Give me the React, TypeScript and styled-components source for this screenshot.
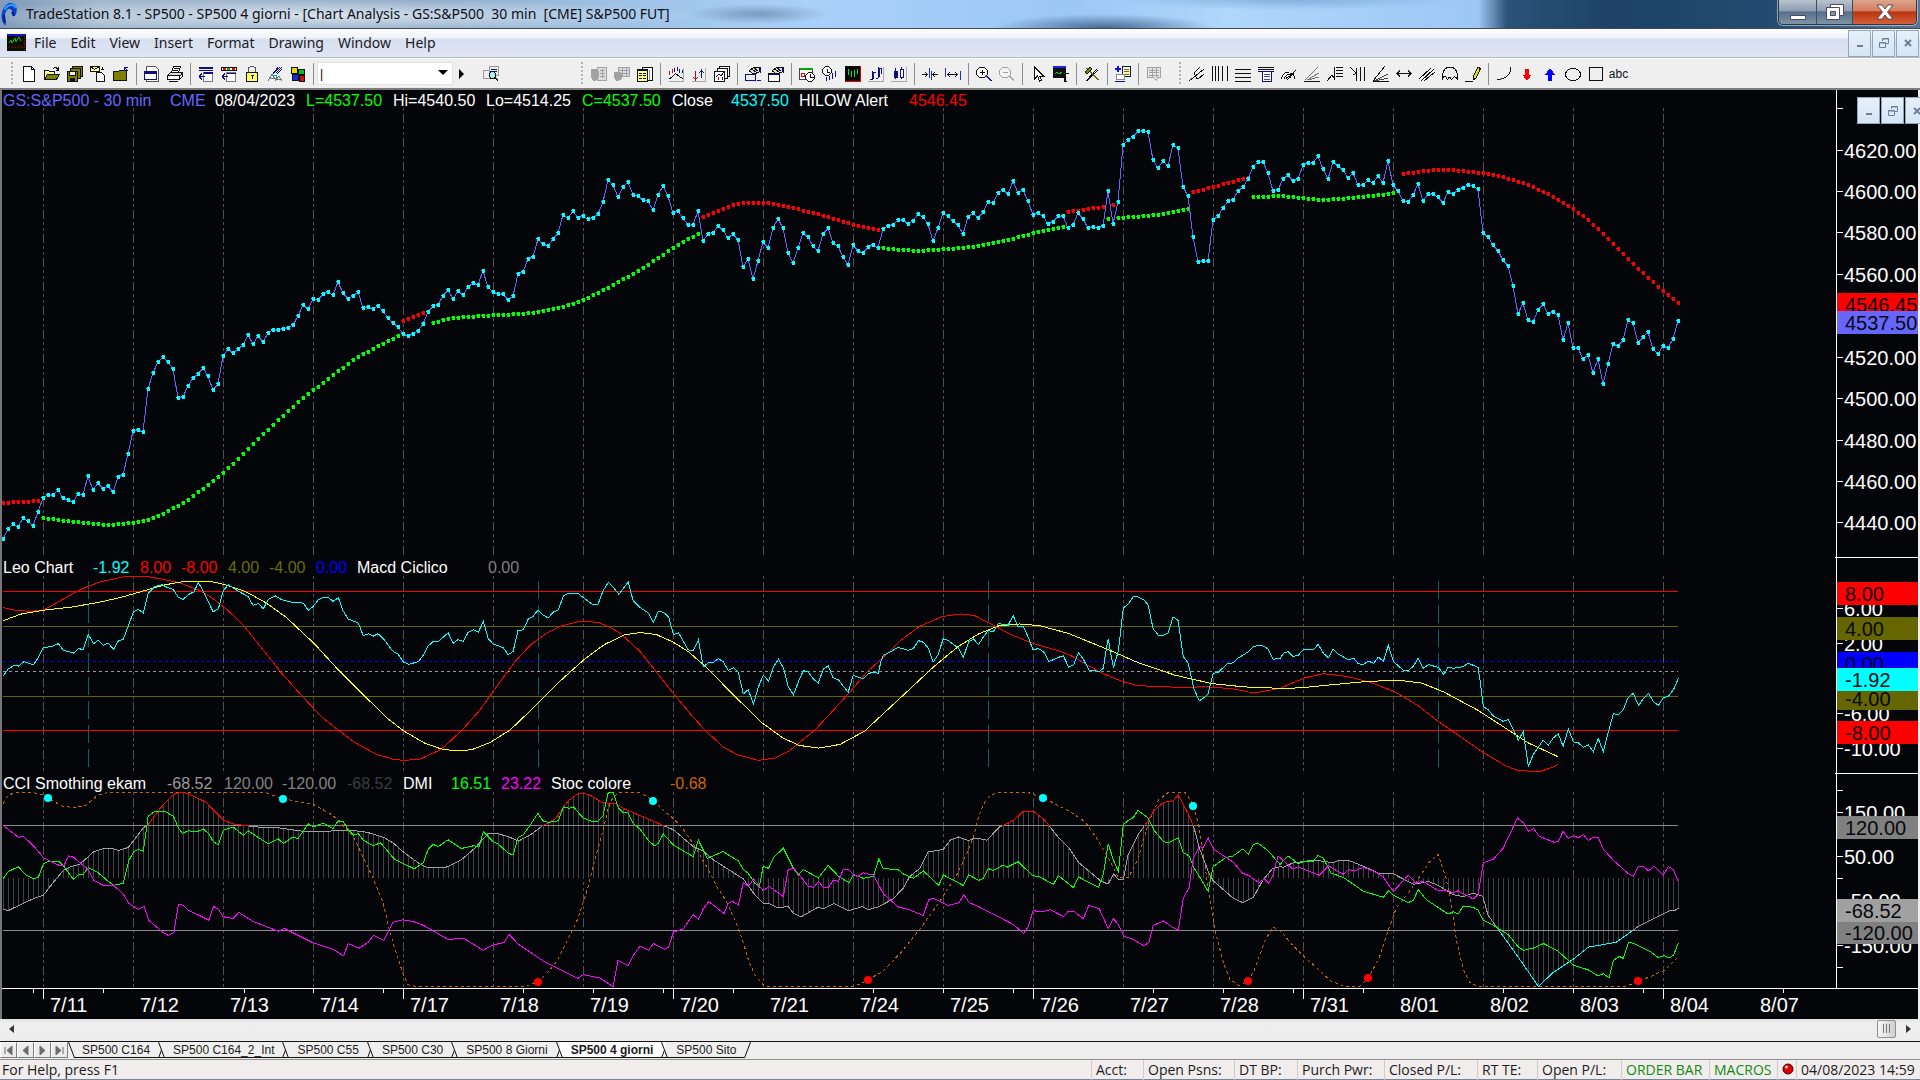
import React from "react";
import styled, { createGlobalStyle } from "styled-components";

const UI_FONT = '"Noto Sans", "Open Sans", sans-serif';
const CHART_FONT = '"Liberation Sans", Arial, sans-serif';
const CHART_BG = "#040508";

const GlobalStyle = createGlobalStyle`
  *, *::before, *::after { box-sizing: border-box; }
  body { margin: 0; background: #f0eeee; font-family: ${UI_FONT}; color: #1b1b22; }
  button { font: inherit; color: inherit; padding: 0; border: 0; background: none; }
`;

/* ------------------------------------------------------------------ */
/* Chart data                                                          */
/* ------------------------------------------------------------------ */

const FIRST_X = 3;
const BAR = 5;
const barX = (i: number) => FIRST_X + i * BAR;
const priceY = (v: number) => 100 + v / 3;

const closes: number[] = [
  ...[
    1257, 1227, 1212, 1221, 1194, 1203, 1218, 1176, 1134, 1125, 1125, 1110, 1134, 1140, 1146, 1122, 1125, 1068, 1110,
    1089, 1107, 1098, 1116, 1071, 1065, 1002, 933, 930, 936, 807, 759, 726, 711, 726, 747, 834, 831, 798, 774, 762, 744,
    768, 810, 792, 708, 687, 699, 687, 675, 645, 672, 648, 666, 639, 630, 630, 627, 624, 615, 588, 555, 567, 537, 540,
    522, 516, 525, 486, 519, 537, 528, 516, 564, 561, 567, 558, 573, 594, 609, 621, 642, 648, 642, 633, 612, 576, 558,
    555, 528, 510, 537, 513, 525, 501, 489, 495, 453, 501, 516, 522, 522, 540, 528, 462, 456, 417, 411, 357, 372, 378,
    357, 339, 285, 294, 273, 294, 288, 297, 294, 282, 246, 180, 195, 231, 201, 186, 225, 228,
  ].map((v) => v + 60),
  300, 303, 330, 285, 258, 288, 339, 333, 354, 375, 375, 333, 423, 402, 399, 378, 390, 414, 402, 420, 501, 477, 537,
  483, 426, 444, 384, 357, 384, 459, 489, 444, 399, 411, 438, 453, 402, 384, 429, 438, 471, 495, 435, 453, 459, 441,
  435, 444, 387, 378, 375, 360, 360, 372, 363, 342, 351, 372, 423, 384, 339, 348, 363, 375, 402, 351, 339, 354, 336,
  306, 309, 279, 270, 282, 243, 279, 270, 303, 345, 339, 348, 372, 366, 348, 348, 384, 375, 339, 357, 384, 381, 384,
  378, 273, 372, 306, 135, 120, 111, 93, 93, 96, 180, 204, 183, 198, 135, 144, 261, 288, 411, 486, 483, 483, 360, 348,
  324, 303, 300, 273, 261, 237, 201, 186, 186, 219, 273, 270, 237, 225, 243, 237, 195, 189, 189, 168, 207, 237, 186,
  198, 210, 234, 219, 255, 255, 240, 249, 228, 249, 183, 255, 273, 303, 306, 285, 252, 303, 282, 282, 291, 309, 276,
  282, 270, 264, 255, 258, 267, 399, 411, 435, 453, 480, 498, 558, 642, 609, 660, 666, 630, 612, 642, 636, 645, 720,
  669, 744, 744, 777, 765, 819, 777, 852, 792, 732, 738, 720, 660, 669, 729, 711, 696, 747, 762, 738, 744, 717, 663,
];

type Knot = [number, number];

const highAlerts: Knot[][] = [
  [[0, 1209], [7, 1203]],
  [[80, 663], [84, 639]],
  [[140, 351], [146, 315], [148, 309], [153, 309], [158, 324], [165, 351], [170, 375], [175, 390]],
  [[213, 336], [220, 321]],
  [[222, 315]],
  [[238, 276], [242, 261], [248, 237], [249, 234]],
  [[280, 222], [282, 218], [286, 210], [290, 210], [296, 219], [300, 231], [304, 249], [309, 282], [314, 328],
    [317, 360], [320, 402], [323, 447], [326, 492], [329, 534], [332, 573], [335, 609]],
];

const lowAlerts: Knot[][] = [
  [[8, 1254], [11, 1260], [16, 1269], [21, 1275], [26, 1269], [29, 1260], [32, 1242], [37, 1200], [42, 1143],
    [46, 1092], [50, 1032], [55, 960], [60, 894], [65, 837], [70, 780], [75, 738], [79, 708]],
  [[86, 669], [88, 660], [90, 654], [96, 648], [106, 639], [112, 621], [116, 600], [119, 579], [127, 513],
    [131, 474], [134, 444], [137, 417], [139, 402]],
  [[176, 444], [180, 450], [183, 453], [189, 447], [195, 438], [201, 420], [207, 396], [212, 381]],
  [[221, 357]],
  [[223, 354], [229, 348], [233, 339], [237, 327]],
  [[250, 291], [256, 288], [260, 294], [264, 300], [270, 294], [275, 286], [278, 279]],
];

/* One dot for every bar between the knots of a segment. */
const fillBars = (knots: Knot[]): Knot[] => {
  const out: Knot[] = [knots[0]];
  for (let k = 1; k < knots.length; k++) {
    const [a, va] = knots[k - 1];
    const [b, vb] = knots[k];
    for (let i = a + 1; i <= b; i++) out.push([i, va + ((vb - va) * (i - a)) / (b - a)]);
  }
  return out;
};

/* Indicator traces are kept in three stretches: left, middle and right. */
const STRETCHES = [
  { x: 0, scale: 2.45 },
  { x: 640, scale: 2.45 },
  { x: 1240, scale: 2.306 },
];
const paneY = (v: number) => 550 + v / 2.958;

const trace = (...parts: string[]): Knot[] => {
  const out: Knot[] = [];
  parts.forEach((part, s) => {
    part.split(" ").forEach((pair) => {
      const [px, py] = pair.split(",").map(Number);
      const x = STRETCHES[s].x + px / STRETCHES[s].scale;
      if (!out.length || x > out[out.length - 1][0]) out.push([x, paneY(py)]);
    });
  });
  return out;
};
const toPoints = (t: Knot[]) => t.map(([x, y]) => `${x.toFixed(1)},${y.toFixed(1)}`).join(" ");
const valueAt = (t: Knot[], x: number) => {
  const n = t.findIndex(([tx]) => tx >= x);
  if (n === 0) return t[0][1];
  if (n < 0) return t[t.length - 1][1];
  const [ax, ay] = t[n - 1];
  const [bx, by] = t[n];
  return ay + ((by - ay) * (x - ax)) / (bx - ax);
};

const leo = trace(
  "8,373 20,352 35,341 45,343 59,330 82,340 94,318 106,289 128,285 143,277 155,296 180,305 192,292 204,294 216,250 229,277 241,267 253,282 265,275 278,294 290,269 302,264 314,225 327,183 339,176 351,186 363,128 380,108 397,103 412,112 424,116 437,140 449,146 461,132 475,124 486,96 498,123 510,152 522,183 535,174 547,120 559,103 571,112 584,122 608,138 620,164 633,158 645,174 657,146 675,136 690,147 718,155 743,157 755,178 767,167 780,147 792,140 804,140 816,152 829,141 840,179 853,204 878,216 890,254 902,248 914,255 926,248 939,262 963,300 975,308 988,331 1002,338 1025,330 1037,311 1049,284 1061,271 1074,270 1098,245 1110,276 1122,265 1135,270 1147,243 1160,236 1172,243 1184,211 1196,262 1208,278 1233,289 1245,310 1257,300 1269,238 1282,236 1294,204 1306,196 1318,178 1330,192 1343,201 1355,184 1368,177 1380,136 1392,129 1416,128 1429,141 1453,162 1465,160 1477,122 1490,96 1502,110 1516,131 1539,94 1551,150 1568,170",
  "0,170 20,186 33,214 45,181 57,184 70,198 82,250 94,245 118,295 130,299 143,266 155,346 168,333 180,332 192,321 204,331 216,356 229,348 241,363 253,426 265,413 278,455 290,405 302,370 315,388 327,346 339,323 351,348 363,405 376,428 388,390 400,357 412,361 424,381 437,393 449,352 461,343 473,378 486,384 510,421 522,371 547,381 560,366 572,361 584,365 590,330 596,312 633,288 657,297 670,291 682,268 694,273 706,290 718,332 730,310 743,262 755,268 780,290 792,318 805,272 817,263 829,280 841,258 853,238 865,242 878,218 902,222 914,194 926,226 939,226 951,258 963,296 976,291 990,303 1002,330 1024,318 1037,313 1050,346 1062,340 1074,304 1086,323 1100,355 1125,359 1135,350 1141,304 1147,262 1153,304 1160,348 1172,298 1178,236 1184,172 1196,160 1209,137 1220,139 1235,148 1245,163 1257,233 1270,252 1282,252 1294,245 1306,198 1318,208 1331,315 1343,335 1357,410 1370,446 1380,439 1392,425 1404,365 1416,362 1440,335 1453,334 1465,320 1490,301 1502,287 1514,282 1527,284 1538,292 1551,323 1568,321",
  "0,318 10,312 30,288 42,282 54,282 66,290 77,321 88,323 100,306 111,300 122,315 134,312 146,294 170,294 180,279 192,305 204,319 215,293 227,308 250,325 262,320 273,337 285,338 296,329 308,335 319,317 331,329 342,282 354,330 377,356 388,357 400,343 411,320 422,350 435,339 457,347 470,368 480,347 492,350 515,345 526,335 538,341 549,347 555,400 561,463 572,472 584,491 607,507 619,501 630,530 642,563 653,537 665,640 676,606 699,563 711,578 722,556 734,544 745,581 757,530 769,568 780,570 792,584 803,576 815,597 826,557 838,597 849,540 861,484 872,487 884,472 895,437 907,424 919,460 930,440 942,424 953,448 965,460 976,437 988,433 1000,412 1011,379"
);
const cycleFast = trace(
  "8,170 30,177 75,182 106,178 130,162 180,128 216,107 250,93 302,80 327,78 363,79 400,87 440,97 490,120 520,142 560,180 600,228 640,288 690,364 740,432 790,496 830,534 870,570 920,603 965,620 990,622 1028,619 1075,593 1090,580 1131,534 1175,475 1210,415 1262,330 1300,280 1340,246 1375,225 1420,211 1465,214 1490,226 1520,247 1568,300",
  "0,302 30,345 82,425 130,494 160,534 205,584 240,606 290,622 330,616 365,595 390,570 430,531 465,485 510,426 555,362 600,313 640,266 685,226 740,197 785,189 820,194 860,219 910,251 960,275 1030,300 1060,315 1100,343 1135,366 1180,388 1215,400 1245,403 1340,407 1380,404 1425,408 1460,412 1490,420 1515,421 1568,409",
  "0,415 20,421 45,421 90,408 150,378 192,366 215,369 250,375 300,391 360,421 410,460 455,505 500,545 560,598 610,637 640,652 690,656 715,645 733,635"
);
const cycleSlow = trace(
  "8,209 50,190 106,178 180,168 250,153 300,139 340,125 400,104 440,95 470,92 515,93 550,102 600,122 650,155 700,198 770,277 830,356 895,434 950,499 990,536 1040,571 1080,588 1115,594 1155,591 1200,570 1250,532 1310,463 1370,390 1430,325 1480,280 1530,251 1568,244",
  "0,244 40,250 82,273 120,302 165,350 230,430 300,512 350,556 390,578 437,586 490,575 550,536 640,435 720,345 780,285 830,248 880,224 930,219 980,224 1050,247 1150,296 1220,333 1310,370 1400,395 1480,405 1568,409",
  "0,404 60,409 140,408 200,400 300,388 370,386 420,394 470,420 550,475 610,525 665,571 733,611"
);
const cci = trace(
  "8,1063 20,1067 60,1043 85,1030 106,1021 130,984 155,948 175,936 195,930 229,893 253,883 278,884 290,889 314,880 327,860 351,822 363,812 390,768 412,738 430,719 455,718 475,729 505,746 522,768 547,798 570,810 600,815 650,822 685,822 743,832 800,832 853,828 900,835 940,850 965,868 988,893 1025,926 1045,939 1090,940 1130,917 1165,880 1196,838 1220,839 1250,850 1270,861 1300,842 1330,815 1360,796 1392,742 1415,722 1430,719 1450,728 1475,747 1510,751 1530,766 1568,785",
  "0,786 57,815 82,828 130,877 155,891 180,917 253,973 278,1015 302,1046 315,1045 339,1059 363,1054 376,1075 395,1085 412,1073 437,1056 449,1061 475,1046 510,1067 545,1055 560,1064 585,1055 620,1032 645,1000 660,967 685,942 706,893 743,886 760,858 780,849 805,860 820,852 850,858 880,820 915,800 940,772 963,772 990,797 1025,850 1050,880 1075,925 1100,950 1130,980 1147,988 1160,958 1172,975 1184,974 1196,900 1220,842 1245,800 1260,770 1282,747 1306,742 1319,725 1343,780 1357,820 1370,880 1392,950 1404,978 1453,1030 1477,1043 1502,1028 1527,975 1550,942 1568,937",
  "0,1043 15,1042 30,1030 54,979 77,942 100,938 122,926 170,917 215,925 230,917 250,918 285,936 320,956 354,958 400,989 435,981 457,992 492,1020 515,1025 538,1015 560,1024 572,1080 600,1130 642,1205 688,1291 722,1250 769,1210 803,1175 868,1160 919,1113 990,1067 1003,1066 1011,1059"
);
const dmiPlus = trace(
  "8,972 20,951 45,937 62,960 82,972 94,968 106,929 120,920 145,922 157,936 168,955 180,974 192,960 204,959 216,939 241,955 265,980 278,992 302,986 316,918 327,893 339,885 351,891 357,840 363,787 380,773 404,773 425,788 437,822 447,838 461,831 483,833 498,825 512,840 522,862 535,872 547,829 571,819 596,844 608,831 645,860 657,869 682,855 694,868 718,849 730,854 755,810 767,819 792,808 816,824 829,800 841,804 853,828 866,843 878,839 890,858 914,875 932,866 945,884 965,913 988,928 1015,943 1037,925 1049,885 1061,871 1074,877 1098,857 1130,883 1160,875 1174,878 1184,833 1208,862 1220,869 1245,897 1257,902 1269,851 1282,842 1294,822 1318,779 1330,801 1343,806 1368,801 1380,760 1395,764 1405,760 1429,793 1453,804 1465,802 1477,788 1490,718 1502,718 1514,761 1527,777 1539,778 1551,809 1568,826",
  "0,829 20,858 35,875 45,868 57,840 82,873 130,907 143,858 165,912 204,892 218,903 241,920 253,945 265,956 280,984 292,996 302,935 315,942 327,910 351,882 376,942 388,961 400,945 437,970 461,933 486,965 512,984 522,960 547,971 572,965 585,914 596,942 633,946 645,958 670,971 694,949 732,992 743,961 792,992 805,961 830,977 841,972 853,942 865,948 890,932 900,938 926,922 963,964 976,965 1013,989 1025,963 1062,999 1074,967 1123,998 1135,960 1147,869 1160,918 1172,952 1184,812 1196,800 1209,791 1220,770 1245,793 1260,830 1282,862 1294,866 1319,852 1331,895 1345,905 1357,940 1370,965 1392,1010 1404,937 1435,910 1453,905 1477,884 1490,900 1502,872 1514,867 1538,889 1568,930",
  "0,890 66,892 90,930 111,905 134,928 150,920 170,920 180,903 192,912 210,955 240,970 285,1010 331,1027 342,1008 355,1022 388,1043 400,1036 411,1004 430,1035 480,1077 492,1070 503,1077 515,1053 538,1057 549,1065 561,1095 584,1110 619,1138 640,1172 653,1184 676,1178 700,1164 734,1187 769,1228 803,1242 826,1260 838,1253 851,1266 861,1214 875,1202 884,1208 896,1161 907,1163 945,1187 965,1206 978,1200 990,1207 1000,1198 1011,1162"
);
const dmiMinus = trace(
  "8,815 45,850 57,847 82,875 106,910 145,933 157,933 168,905 180,909 216,945 229,977 253,992 278,991 302,1018 316,1046 339,1063 353,1054 365,1096 400,1132 412,1140 426,1131 437,1048 449,1051 461,1065 512,1095 523,1054 535,1063 547,1085 571,1090 585,1072 620,1099 682,1128 696,1119 767,1162 816,1181 842,1201 853,1164 880,1178 902,1160 915,1140 940,1155 963,1101 988,1094 1015,1100 1037,1110 1098,1152 1135,1148 1184,1184 1206,1169 1235,1161 1247,1137 1270,1166 1330,1215 1392,1253 1416,1267 1429,1256 1470,1266 1502,1292 1514,1214 1539,1229 1551,1200 1568,1172",
  "0,1172 21,1184 33,1164 60,1181 70,1175 82,1130 105,1122 130,1079 143,1092 155,1062 168,1040 206,1075 216,1045 226,1039 241,1050 253,984 266,995 278,973 302,1008 316,995 351,1025 363,945 378,942 412,995 426,998 437,980 449,998 461,999 473,977 486,980 498,945 510,945 522,958 533,966 547,955 572,962 596,1017 633,1056 657,1063 694,1081 707,1035 718,1029 755,1052 782,1043 793,1020 807,1043 830,1055 915,1108 940,1134 951,1115 963,1066 980,1071 1005,1064 1037,1084 1050,1068 1062,1068 1086,1090 1100,1051 1125,1061 1147,1120 1160,1090 1172,1108 1186,1143 1209,1152 1235,1171 1247,1160 1257,1111 1282,1097 1306,1117 1319,1124 1331,1030 1345,1000 1355,915 1370,877 1380,880 1392,852 1406,886 1453,923 1477,957 1490,962 1516,984 1530,973 1540,986 1550,964 1563,905",
  "0,950 122,944 134,937 183,962 204,934 238,960 250,945 262,950 285,939 308,950 331,967 342,990 354,1010 388,962 405,985 422,980 455,1006 480,1008 492,1014 503,1008 538,1032 549,1020 561,925 584,915 607,882 640,793 655,808 665,832 677,824 690,847 725,865 734,862 745,832 757,853 769,845 780,851 792,842 803,859 815,850 826,850 838,885 861,918 895,957 907,965 919,936 930,936 942,949 955,936 976,962 988,936 1000,947 1009,978"
);
const stochastic = trace(
  "8,750 20,725 40,717 80,717 106,725 120,735 150,757 180,762 210,755 240,725 265,717 650,717 690,735 767,752 816,785 853,830 865,845 890,910 914,970 939,1045 951,1110 965,1170 988,1256 1000,1286 1020,1291 1285,1291 1319,1277 1345,1245 1365,1215 1392,1150 1416,1090 1440,1000 1453,937 1477,830 1490,765 1502,730 1520,717 1568,717",
  "0,717 33,742 57,770 82,795 105,825 131,870 143,895 165,940 190,1000 210,1035 240,1115 255,1170 265,1210 280,1255 302,1286 315,1291 522,1291 545,1281 596,1245 640,1190 690,1115 740,1030 777,960 805,885 817,848 830,785 845,745 860,724 880,717 950,717 988,733 1025,756 1055,775 1090,803 1120,855 1147,910 1172,970 1196,970 1220,915 1245,810 1270,740 1294,717 1335,717 1355,750 1370,820 1392,1000 1408,1120 1430,1225 1445,1270 1467,1288 1490,1275 1506,1240 1530,1160 1550,1115 1568,1125",
  "0,1291 122,1170 150,1205 180,1240 210,1275 240,1291 275,1291 295,1267 320,1210 342,1125 360,1060 388,1015 411,973 435,925 457,900 475,970 486,1040 500,1160 515,1240 530,1280 549,1291 890,1291 919,1275 950,1260 980,1242 1009,1205"
);
const topSignals: Knot[] = [[48, 798], [283, 799], [653, 801], [1043, 798], [1193, 806]];
const bottomSignals: Knot[] = [[538, 982], [868, 980], [1248, 981], [1368, 978], [1638, 981]];

const dayLines = Array.from({ length: 19 }, (_, i) => 43 + i * 90);
const cycleLines = [88, 538, 988, 1438];
const dates = ["7/11", "7/12", "7/13", "7/14", "7/17", "7/18", "7/19", "7/20", "7/21", "7/24", "7/25", "7/26", "7/27",
  "7/28", "7/31", "8/01", "8/02", "8/03", "8/04", "8/07"];
const longTicks = [43, 403, 673, 1033, 1303, 1663];
const shortTicks = [33, 103, 244, 313, 383, 523, 593, 663, 733, 873, 943, 1013, 1153, 1223, 1293, 1363, 1503, 1573,
  1643, 1783];

/* ------------------------------------------------------------------ */
/* Window frame                                                        */
/* ------------------------------------------------------------------ */

const Window = styled.div`
  display: flex;
  flex-direction: column;
  min-height: 100vh;
  overflow: hidden;
  background: #f0eeee;
`;

const TitleBar = styled.header`
  display: flex;
  align-items: center;
  gap: 8px;
  height: 29px;
  padding-left: 1px;
  border-bottom: 1px solid #3c4a5c;
  background:
    radial-gradient(70px 10px at 39.500% 50%, rgba(80, 105, 140, 0.5), transparent),
    radial-gradient(110px 14px at 57.500% 100%, rgba(40, 75, 115, 0.75), transparent),
    radial-gradient(170px 10px at 67% 0, rgba(70, 125, 180, 0.4), transparent),
    radial-gradient(380px 16px at 17% 55%, rgba(238, 244, 250, 0.75), transparent),
    linear-gradient(90deg, #7f9bb9 0, #a3b8cd 5%, #93adc8 22%, #9fc3e6 33%, #a9d0f9 42%, #9cc8f5 56%, #b0d6fb 64%,
      #9dc8f4 77%, #2d5279 78.500%, #1d4266 84%, #234a70 92%, #5b7690 100%);
`;
const Title = styled.h1`
  flex: 1;
  margin: 0;
  font: 400 14px/28px ${UI_FONT};
  color: #0c0f18;
  white-space: pre;
`;
const Caption = styled.div`
  display: flex;
  align-self: flex-start;
  height: 25px;
  margin-right: 3px;
  border: 1px solid #27384d;
  border-top: 0;
  border-radius: 0 0 5px 5px;
  overflow: hidden;
  box-shadow: 0 0 0 1px rgba(225, 235, 245, 0.55);
`;
const CaptionButton = styled.button<{ $width: number; $close?: boolean }>`
  display: grid;
  place-items: center;
  width: ${(p) => p.$width}px;
  border-right: 1px solid #3a4c62;
  background: ${(p) =>
    p.$close
      ? "linear-gradient(#dca58c 0, #d27c5c 45%, #b8350f 50%, #d4603a 100%)"
      : "linear-gradient(#b9c4d0 0, #8d9db0 45%, #586e88 50%, #8093a8 100%)"};
  &:last-child { border-right: 0; }
`;

const MenuBar = styled.nav`
  display: flex;
  align-items: center;
  height: 29px;
  padding: 0 1px 0 7px;
  border-bottom: 1px solid #b4b9c8;
  background: linear-gradient(#fdfdff 0, #f0f3fa 30%, #d8dff0 38%, #dfe5f4 100%);
`;
const MenuItem = styled.button`
  padding: 0 7px;
  font-size: 14px;
  line-height: 28px;
`;
const MenuSpace = styled.span`flex: 1;`;
const MdiGroup = styled.div`
  display: flex;
  gap: 1px;
`;
const FloatingMdi = styled(MdiGroup)`
  position: absolute;
  top: 7px;
  right: -10px;
  z-index: 1;
`;
const MdiButton = styled.button`
  display: grid;
  place-items: center;
  width: 23px;
  height: 27px;
  border: 1px solid #93a7bc;
  background: linear-gradient(#e6f0fa, #d6e5f4);
  color: #6d8196;
`;

/* ------------------------------------------------------------------ */
/* Tool bar                                                            */
/* ------------------------------------------------------------------ */

const ToolBar = styled.div`
  display: flex;
  align-items: center;
  height: 32px;
  padding-left: 11px;
  border-top: 1px solid #fff;
  border-bottom: 2px solid #7d7d7b;
  background: #f0efef;
`;
const Grip = styled.span`
  width: 2px;
  height: 24px;
  margin-right: 4px;
  background: repeating-linear-gradient(#b5b5b0 0 2px, transparent 2px 4px);
`;
const ToolButton = styled.button`
  display: grid;
  place-items: center;
  width: 23px;
  height: 24px;
  svg { display: block; }
`;
const Divider = styled.span`
  width: 8px;
  height: 22px;
  background: linear-gradient(#8e8e8e, #8e8e8e) 4px 0 / 1px 100% no-repeat;
`;
const Space = styled.span<{ $w: number }>`width: ${(p) => p.$w}px;`;
const Combo = styled.div`
  display: flex;
  width: 136px;
  height: 23px;
  border: 1px solid #e2e2e2;
  background: #fff;
`;
const ComboInput = styled.input`
  flex: 1;
  min-width: 0;
  padding: 0 2px;
  border: 0;
  outline: 0;
  font: 12px/18px ${CHART_FONT};
`;
const ArrowButton = styled.button`
  display: grid;
  place-items: center;
  width: 18px;
  height: 20px;
`;

/* ------------------------------------------------------------------ */
/* Chart                                                               */
/* ------------------------------------------------------------------ */

const ChartFrame = styled.main`
  position: relative;
  margin-right: 2px;
  border-left: 2px solid #77777a;
  background: ${CHART_BG};
  font-family: ${CHART_FONT};
`;
const Pane = styled.section`
  display: grid;
  grid-template-columns: minmax(0, 1fr) 83px;
  overflow: hidden;
`;
const Plot = styled.svg`
  grid-area: 1 / 1;
  display: block;
`;
const Axis = styled.svg`
  grid-area: 1 / 2;
  display: block;
  font: 20px ${CHART_FONT};
`;
const Legend = styled.div`
  grid-area: 1 / 1;
  display: flex;
  align-self: start;
  padding-left: 1px;
  font-size: 16px;
  line-height: 22px;
  white-space: pre;
`;
const LegendItem = styled.span<{ $slot: number; $color: string }>`
  flex: none;
  width: ${(p) => p.$slot}px;
  color: ${(p) => p.$color};
`;
const DateBar = styled.div`
  display: grid;
  border-top: 1px solid #fff;
`;
const DateTicks = styled.svg`
  grid-area: 1 / 1;
  display: block;
`;
const DateRow = styled.div`
  grid-area: 1 / 1;
  display: flex;
  padding: 5px 0 0 48px;
  overflow: hidden;
  color: #fff;
  font-size: 20px;
  line-height: 22px;
`;
const DateLabel = styled.time`
  flex: none;
  width: 90px;
`;

/* ------------------------------------------------------------------ */
/* Scroll bar, tabs and status bar                                     */
/* ------------------------------------------------------------------ */

const ScrollBar = styled.div`
  display: flex;
  align-items: center;
  height: 23px;
  padding: 0 2px 3px 2px;
  border-bottom: 1px solid #111;
  background: linear-gradient(#e2e2e2, #eeeeee 20%, #ededed);
`;
const ScrollArrow = styled.button`
  display: grid;
  place-items: center;
  width: 20px;
  height: 18px;
`;
const ScrollTrack = styled.div`
  display: flex;
  flex: 1;
  justify-content: flex-end;
  padding-right: 2px;
`;
const Thumb = styled.div`
  display: grid;
  place-items: center;
  width: 19px;
  height: 18px;
  border: 1px solid #8f8f8f;
  border-radius: 2px;
  background: linear-gradient(90deg, #f6f6f6, #cfcfcf);
`;

const TabStrip = styled.div`
  display: flex;
  height: 18px;
  border-bottom: 1px solid #8f8f8f;
  background: #f0efef;
`;
const NavButton = styled.button`
  display: grid;
  place-items: center;
  width: 17px;
  height: 16px;
  border: 1px solid;
  border-color: #fff #7c7c7c #7c7c7c #fff;
  background: #ececec;
  color: #6c6c6c;
`;
const Tabs = styled.div`
  display: flex;
  padding-left: 3px;
`;
const Tab = styled.button<{ $active?: boolean }>`
  position: relative;
  height: 16px;
  padding: 0 12px 0 11px;
  border-bottom: 1px solid #111;
  background: ${(p) => (p.$active ? "#fff" : "transparent")};
  font: ${(p) => (p.$active ? 700 : 400)} 12px/16px ${CHART_FONT};
  white-space: nowrap;
`;
const TabEdge = styled.svg<{ $side: "left" | "right" }>`
  position: absolute;
  top: 0;
  ${(p) => p.$side}: -3px;
  z-index: 1;
`;

const StatusBar = styled.footer`
  display: flex;
  align-items: center;
  height: 21px;
  padding-left: 2px;
  border-bottom: 2px solid #73849c;
  background: #f1eded;
  font: 14px/20px "Open Sans", "Noto Sans", sans-serif;
`;
const StatusText = styled.span`
  flex: 1;
`;
const Cell = styled.span<{ $w: number; $green?: boolean }>`
  flex: none;
  width: ${(p) => p.$w}px;
  padding-left: 4px;
  border-left: 1px solid #cfcccc;
  color: ${(p) => (p.$green ? "#128a12" : "inherit")};
  white-space: nowrap;
`;

/* ------------------------------------------------------------------ */
/* Icons                                                               */
/* ------------------------------------------------------------------ */

type Stroke = [string, string?, string?];
const K = "#111";
const N = "#10107c";
const G = "#a2a2a2";

/* Each icon is a list of [path, stroke, fill] on a 16 by 16 grid. */
const icons: Record<string, Stroke[]> = {
  new: [["M2.5.5h8l3 3v12h-11zM10.5.5v3h3", K, "#fff"]],
  open: [["M.5 13.5v-9h4l1 1h5v3", K, "#ffffa0"], ["M.5 13.5l3-5h12l-3 5z", K, "#808000"], ["M9 3c2-3 4-1 5 1M14.5 1v3h-3", K]],
  saveAll: [["M5.5.5h10v10h-10z", K, "#808000"], ["M3.5 2.5h10v10h-10z", K, "#808000"], ["M.5 5.5h10v10h-10z", K, "#808000"], ["M2.5 5.5h6v4h-6z", K, "#eee"], ["M3.5 12.5h4v3h-4z", K, "#111"]],
  mail: [["M.5.5h9v5h-9z", K, "#ffff90"], ["M.5.5l4 3 5-3", K], ["M6.5 6.5h5l3 3v6h-8z", K, "#fff"], ["M12.5 1v3M10.5 3.5h3", K]],
  closeFolder: [["M.5 14.5v-9h5l1-1h7v10z", K, "#808000"], ["M11 1.5h4M11.5 1.5l4 4M11.5 1v3", N]],
  window: [["M2.5.5h9l3 3v12h-12z", "#555", "#fff"], ["M.5 5.5h12v8h-12z", N, "#fff"], ["M.5 7.5h12", N], ["M1 6.5h12", N]],
  print: [["M4.5 6.5l2-6h7l-2 6z", K, "#fff"], ["M.5 9.5l3-3h12l-2 3z", K, "#ddd"], ["M.5 9.5h12v4h-12z", K, "#fff"], ["M12.5 13.5l3-3v-4M6.5 2.5h6M5.5 4.5h5M2 15.5h9", K]],
  tableLeft: [["M1 1.5h14M1 2.5h14M1 4.5h14", N], ["M5.5 6.5h9v9h-9z", "#777", "#fff"], ["M5.5 6.5h9M5.5 7.5h9M1 10.5h6M1 10.5l3-3M1 10.5l3 3", N]],
  tableColor: [["M.5 1.5h15v3h-15z", K, "#fff"], ["M2 2.5h3M2 3.5h3", "#f00"], ["M6 2.5h3M6 3.5h3", "#0a0"], ["M11 2.5h3M11 3.5h3", "#f00"], ["M5.5 6.5h9v9h-9z", "#777", "#fff"], ["M5.5 7.5h9M1 10.5h6M1 10.5l3-3M1 10.5l3 3", N]],
  lock: [["M4.5 7V3q0-2.5 3.5-2.5T11.5 3v4", "#555"], ["M2.5 6.5h11v8.5h-11z", K, "#ffff60"], ["M8.5 9v4M7 9.5h3", K]],
  sketch: [["M15 1L9 7M13 1L7 7M15 3l-5 5M11 1L6 8", N], ["M1 15l4-7 4 7M3 12.5h6M8 15l4-5 3 5M10 13.5h4", "#777"], ["M5 9.5h4v3", "#0aa"]],
  blocks: [["M1.5 1.5h6v6h-6z", K, "#e8d800"], ["M8.5 3.5h6v5h-6z", K, "#00c030"], ["M2.5 8.5h6v6h-6z", K, "#1030e0"], ["M9.5 9.5h5v6h-5z", K, "#d01010"]],
  find: [["M.5 4.5h6v8h-6zM6.5.5h9v9h-9z", "#999", "#eee"], ["M8 3.5h6M8 5.5h6", N], ["M9.5 5.5a3.5 3.5 0 1 0 .01 0z", K, "#a8f0f8"], ["M11.5 11.5l4 4M12.5 11.5l3 3", K]],
  handTableA: [["M6.5 1.5h9v13h-9z", G, "#ddd"], ["M.5 3.5h5l2 2v6l-3 3h-2l-2-4z", G, G], ["M9 4.5h5M9 7.5h5M9 10.5h5M11.5 3v9", G]],
  handTableB: [["M4.5 1.5h11v9h-11z", G, "#ddd"], ["M.5 6.5h5l2 1v5l-3 2h-2l-2-3z", G, G], ["M5 4.5h10M5 7.5h10M8.5 2v8M12.5 2v8", G]],
  report: [["M5.5 1.5h10v13h-10z", K, "#fff"], ["M.5 3.5h10v12h-10z", K, "#ffff90"], ["M2 7.5h3M2 9.5h3M2 12.5h3M6 7.5h3M6 9.5h3M6 12.5h3M1 4.5h9", K], ["M12.5 4v10", "#888"]],
  indicator: [["M15.5 2v13.5H1", "#aaa"], ["M1 12c3 2 4-5 7-4s4 5 7 4", K], ["M1.5 5v4M4.5 3v4", "#c01010"], ["M6.5 2v4M9.5 1v4M11.5 3v4M14.5 4v3", N]],
  arrows: [["M14.5 2v13.5H1", "#aaa"], ["M4.5 5v9M2.5 11l2 3 2-3", "#a01010"], ["M10.5 12V5M8.5 7l2-3 2 3", N]],
  charts: [["M5.5.5h10v10h-10z", K, "#fff"], ["M3.5 2.5h10v10h-10z", K, "#fff"], ["M.5 5.5h10v10h-10z", K, "#fff"], ["M2 11l3-3 2 2 3-4", N], ["M4.5 14v-3", "#c00"], ["M8.5 14v-3", N]],
  propsA: [["M.5 8.5h10v6h-10z", N, "#eee"], ["M4 5l5-4h5v5l-5 2z", K, "#ddd"], ["M7 3l5 4M9 2l4 3", K], ["M15.5 1v6", N], ["M12 14.5h4", N]],
  propsB: [["M.5 7.5h11v8h-11z", K, "#fff"], ["M.5 8.5h11", N], ["M4 5l5-4h5v5l-5 2z", K, "#ddd"], ["M7 3l5 4M9 2l4 3", K], ["M15.5 1v6", N]],
  calendar: [["M.5 2.5h13v11H.5z", "#444", "#fff"], ["M.5 2.5h13M.5 3.5h13", "#0a0"], ["M2.5 7.5h3v3h-3z", "#e00"], ["M11 6.5a4.5 4.5 0 1 0 .01 0z", K, "#fff"], ["M11.5 8v3h3", K]],
  clockBars: [["M5 .5a4.5 4.5 0 1 0 .01 0z", K, "#fff"], ["M5.5 3v3h2", K], ["M4.5 11v4M7.5 10v4M10.5 7v6M13.5 5v6", N]],
  blackChart: [["M.5.5h15v14H.5z", K, "#000"], ["M3.5 3v6M6.5 5v6M9.5 4v7M12.5 3v5", "#0e0"], ["M0 15.5h16M15.5 0v16", "#d00"]],
  bars: [["M15.5 1v14.5H0", "#aaa"], ["M4.5 5v9M2 13.5h2M5 6.5h3M10.5 1v11M8 12.5h2M10 2.5h3M13.5 2v6", N], ["M5.5 6v7M11.5 2v9", N]],
  candles: [["M15.5 1v14.5H0", "#aaa"], ["M4.5 2v11", N], ["M3.5 5h3v6h-3z", N, N], ["M10.5 1v12", N], ["M9.5 3h3v8h-3z", N, "#fff"]],
  squeeze: [["M0 8.5h5M3 6l2 2.5L3 11M16 8.5h-5M13 6l-2 2.5 2 2.5", K], ["M7.5 2v10M9.5 5v9", "#2030d0"]],
  widen: [["M3 8.5h9M5 6L3 8.5 5 11M10 6l2 2.5L10 11", K], ["M.5 2v9M15.5 5v9", "#2030d0"]],
  zoomIn: [["M6 1a5.5 5.5 0 1 0 .01 0z", K, "#fff"], ["M6.5 4v5M4 6.5h5", K], ["M10 10l5 5M11 10l5 5", N]],
  zoomOut: [["M6 1a5.5 5.5 0 1 0 .01 0z", G, "#f4f4f4"], ["M4 6.5h5M10 10l5 5M11 10l4 4", G]],
  pointer: [["M4.5 1v12l3-3 2 5 2-1-2-4h4z", K, "#fff"]],
  chartText: [["M.5 1.5h12v10H.5z", K, "#111"], ["M0 .5h13M0 1.5h13", "#22f"], ["M2 8l2-2 2 2 3-2", "#0d0"], ["M9 7.5h7M12.5 7v8M11 15.5h3M11.5 8v7", K]],
  tools: [["M2 15L13 3M3 15L14 4", K], ["M2 2l12 12M3 2l12 12", "#6a6a00"], ["M1 6l5-5 2 2-5 5z", K, "#808000"]],
  addTable: [["M0 3.5h6M0 2.5h6M2.5 0v6M3.5 0v6", "#1010d0"], ["M7.5.5h8v10h-8z", N, "#ffffa0"], ["M9 3.5h5M9 5.5h5M9 8.5h5", "#665"], ["M1.5 8.5h8v5h-8z", "#888", "#fff"], ["M0 15.5h10", N]],
  comment: [["M1.5 1.5h13v10h-3l-1 3-3-3h-6z", G, "#e6e6e6"], ["M3 4.5h10M3 6.5h10M3 9.5h10M6.5 2v9M10.5 2v9", G]],
  pitchfork: [["M0 15L15 3M6 6l5-5M9 13l6-5M6 6c-1 3 1 6 3 7", K]],
  vbars: [["M.5 0v15M3.500 0v15M6.500 0v15M10.500 0v15M15.500 0v15", K]],
  hlines: [["M0 3.5h16M0 7.5h16M0 11.5h16M0 15.5h16", K]],
  calculator: [["M0 1.5h16M0 3.5h16M0 5.5h16", K], ["M4.5 5.5h9v10h-9z", N, "#fff"], ["M6 8.5h6M6 10.5h6M6 13.5h6", "#44c"]],
  arcs: [["M0 13q3-8 8-6M3 13q3-6 7-4M5 13q2-4 5-1M6 14L15 4M9 7q4 0 5 6", K]],
  dashFan: [["M0 15.5h16", K], ["M1 14L14 1M3 14l12-7M4 14l11-3", "#777"]],
  steps: [["M0 15l5-6 2.5 4V1", K], ["M9 1.5h7M9 4.5h7M9 7.5h7M9 10.5h7", K]],
  timeBars: [["M0 1l6 6M3 9l4-2M6.5 2v13M10.5 1v14M14.5 1v14", K]],
  fan: [["M0 15.5h16M0 15L12 0", K], ["M1 15l14-7M2 15l13-3", "#444"]],
  hArrow: [["M1 7.5h14M4 4.5L1 7.5l3 3M12 4.5l3 3-3 3", K]],
  slashes: [["M0 13L12 2M2 15L15 3M5 15L16 6", K]],
  dome: [["M.5 14V8q2-7 7.5-7t7.5 7v6M.5 12q3-4 5 2M5.500 14q2-6 4 0M9.500 14q3-6 6-1", K]],
  pencil: [["M0 15.5h8", K], ["M8 14V11L13 1l2.5 1.5L11 12z", K, "#e8e000"], ["M13 1.5l2 1", "#800"]],
  curve: [["M15 1q0 11-14 13", K]],
  down: [["M6.5 3h3v6h2.5l-4 5-4-5h2.500z", "#f00", "#f00"]],
  up: [["M6.5 14h3V8h2.5l-4-5-4 5h2.500z", "#00f", "#00f"]],
  ellipse: [["M8 2.5a7.5 6 0 1 0 .01 0z", K]],
  rect: [["M1.5 1.5h13v13h-13z", K]],
};

const Icon = ({ name }: { name: string }) => (
  <svg width="16" height="16" viewBox="0 0 16 16" shapeRendering="crispEdges" aria-hidden="true">
    {icons[name].map(([d, stroke, fill], i) => (
      <path key={i} d={d} stroke={stroke} fill={fill || "none"} />
    ))}
  </svg>
);
const AbcMark = styled.span`
  font: 12px/16px ${CHART_FONT};
  color: #111;
`;

const Tools = ({ names }: { names: string[] }) => (
  <>
    {names.map((n, i) =>
      n === "|" ? (
        <Divider key={i} />
      ) : (
        <ToolButton key={i} type="button" aria-label={n}>
          <Icon name={n} />
        </ToolButton>
      )
    )}
  </>
);

const MdiButtons = () => (
  <>
    <MdiButton type="button" aria-label="Minimize chart">
      <svg width="12" height="12"><path d="M3 9h6" stroke="currentColor" strokeWidth="2" /></svg>
    </MdiButton>
    <MdiButton type="button" aria-label="Restore chart">
      <svg width="12" height="12" fill="none" stroke="currentColor">
        <path d="M4.500 4V1.500h6v5H8M4 2h7M1.500 5.500h6v5h-6zM1 6h7" />
      </svg>
    </MdiButton>
    <MdiButton type="button" aria-label="Close chart">
      <svg width="12" height="12"><path d="M3 3l6 6M9 3l-6 6" stroke="currentColor" strokeWidth="2" /></svg>
    </MdiButton>
  </>
);

/* ------------------------------------------------------------------ */
/* Chart drawing                                                       */
/* ------------------------------------------------------------------ */

interface Tag { y: number; text: string; color: string; height?: number }
interface Label { y: number; text?: string }

const PriceAxis = ({ top, height, labels, tags }: { top: number; height: number; labels: Label[]; tags: Tag[] }) => (
  <Axis width="83" height={height} viewBox={`1835 ${top} 83 ${height}`}>
    {top > 100 && <path d={`M1835 ${top + 0.5}h83`} stroke="#fff" />}
    {labels.map((l, i) => (
      <g key={i}>
        <path d={`M1837 ${l.y + 0.5}h6`} stroke="#fff" />
        {l.text && <text x="1844" y={l.y + 8} fill="#fff">{l.text}</text>}
      </g>
    ))}
    {tags.map((t) => (
      <g key={t.text}>
        <rect x="1837" y={t.y} width="81" height={t.height || 23} fill={t.color} />
        <text x="1845" y={t.y + 19} fill="#08080c">{t.text}</text>
      </g>
    ))}
    <path d={`M1836.500 ${top}v${height}`} stroke="#fff" />
  </Axis>
);

const DayGrid = ({ from, to }: { from: number; to: number }) => (
  <g stroke="#515153" strokeDasharray="3 3 9 3 3 3" shapeRendering="crispEdges">
    {dayLines.map((x) => (
      <path key={x} d={`M${x + 0.5} ${from}V${to}`} />
    ))}
  </g>
);

const Dots = ({ points, color }: { points: Knot[]; color: string }) => (
  <g fill={color} shapeRendering="crispEdges">
    {points.map(([i, v]) => (
      <path key={i} d={`M${barX(i) - 2} ${Math.round(priceY(v)) - 1}h1v-1h3v4h-3v-2h-1z`} />
    ))}
  </g>
);

const Line = ({ t, color, dash, clip }: { t: Knot[]; color: string; dash?: string; clip?: string }) => (
  <polyline points={toPoints(t)} fill="none" stroke={color} strokeDasharray={dash} shapeRendering="crispEdges"
    clipPath={clip ? `url(#${clip})` : undefined} />
);

const Level = ({ y, color, dash }: { y: number; color: string; dash?: string }) => (
  <path d={`M3 ${y + 0.5}H1678`} stroke={color} strokeDasharray={dash} shapeRendering="crispEdges" />
);

type LegendEntry = [string, number, string];
const LegendRow = ({ entries }: { entries: LegendEntry[] }) => (
  <Legend>
    {entries.map(([text, slot, color], i) => (
      <LegendItem key={i} $slot={slot} $color={color}>{text}</LegendItem>
    ))}
  </Legend>
);

const PricePane = () => (
  <Pane>
    <Plot width="1832" height="467" viewBox="2 90 1832 467">
      <DayGrid from={108} to={555} />
      {lowAlerts.map((k, i) => <Dots key={i} points={fillBars(k)} color="#00ff00" />)}
      {highAlerts.map((k, i) => <Dots key={i} points={fillBars(k)} color="#ff0000" />)}
      <polyline fill="none" stroke="#6666ff" shapeRendering="crispEdges"
        points={closes.map((v, i) => `${barX(i)},${priceY(v).toFixed(1)}`).join(" ")} />
      <Dots points={closes.map((v, i) => [i, v] as Knot)} color="#00ffff" />
    </Plot>
    <LegendRow
      entries={[
        ["GS:S&P500 - 30 min", 167, "#6666ff"], ["CME", 45, "#6666ff"], ["08/04/2023", 91, "#fff"],
        ["L=4537.50", 87, "#00ff00"], ["Hi=4540.50", 93, "#fff"], ["Lo=4514.25", 96, "#fff"],
        ["C=4537.50", 90, "#00ff00"], ["Close", 59, "#fff"], ["4537.50", 68, "#00ffff"],
        ["HILOW Alert", 110, "#fff"], ["4546.45", 70, "#ff0000"],
      ]}
    />
    <PriceAxis top={90} height={467}
      labels={[
        { y: 108 }, { y: 150, text: "4620.00" }, { y: 191, text: "4600.00" }, { y: 232, text: "4580.00" },
        { y: 274, text: "4560.00" }, { y: 357, text: "4520.00" }, { y: 398, text: "4500.00" },
        { y: 440, text: "4480.00" }, { y: 481, text: "4460.00" }, { y: 522, text: "4440.00" },
      ]}
      tags={[{ y: 293, text: "4546.45", color: "#f00" }, { y: 311, text: "4537.50", color: "#6666ff" }]}
    />
  </Pane>
);

const LeoPane = () => (
  <Pane>
    <Plot width="1832" height="216" viewBox="2 557 1832 216">
      <DayGrid from={576} to={771} />
      <g stroke="#006666" strokeDasharray="18 6" shapeRendering="crispEdges">
        {cycleLines.map((x) => <path key={x} d={`M${x + 0.5} 581V767`} />)}
      </g>
      <Level y={591} color="#ff0000" />
      <Level y={626} color="#666600" />
      <Level y={661} color="#0000ff" dash="3 3" />
      <Level y={671} color="#999999" dash="3 3" />
      <Level y={696} color="#666600" />
      <Level y={730} color="#ff0000" />
      <Line t={cycleFast} color="#ff0000" />
      <Line t={cycleSlow} color="#ffff00" />
      <Line t={leo} color="#00ffff" />
    </Plot>
    <LegendRow
      entries={[
        ["Leo Chart", 90, "#fff"], ["-1.92", 47, "#00ffff"], ["8.00", 41, "#ff0000"], ["-8.00", 47, "#ff0000"],
        ["4.00", 41, "#6c6c00"], ["-4.00", 47, "#6c6c00"], ["0.00", 41, "#0000ff"], ["Macd Ciclico", 131, "#fff"],
        ["0.00", 50, "#808080"],
      ]}
    />
    <PriceAxis top={557} height={216}
      labels={[{ y: 608, text: "6.00" }, { y: 643, text: "2.00" }, { y: 713, text: "-6.00" }, { y: 748, text: "-10.00" }]}
      tags={[
        { y: 582, text: "8.00", color: "#f00" }, { y: 617, text: "4.00", color: "#666600" },
        { y: 652, text: "0.00", color: "#0000ff" }, { y: 687, text: "-4.00", color: "#666600" },
        { y: 721, text: "-8.00", color: "#f00" }, { y: 668, text: "-1.92", color: "#00ffff" },
      ]}
    />
  </Pane>
);

const CciPane = () => (
  <Pane>
    <Plot width="1832" height="215" viewBox="2 773 1832 215">
      <defs>
        <clipPath id="overbought"><rect x="0" y="773" width="1834" height="53" /></clipPath>
        <clipPath id="oversold"><rect x="0" y="931" width="1834" height="57" /></clipPath>
      </defs>
      <DayGrid from={792} to={987} />
      <g stroke="#434345" shapeRendering="crispEdges">
        {closes.map((_, i) => (
          <path key={i} d={`M${barX(i) + 0.5} 878V${Math.round(valueAt(cci, barX(i)))}`} />
        ))}
      </g>
      <Level y={825} color="#8a8a8a" />
      <Level y={930} color="#8a8a8a" />
      <Line t={stochastic} color="#cc6600" dash="3 3" />
      <Line t={cci} color="#a0a0a0" />
      <Line t={cci} color="#ff0000" clip="overbought" />
      <Line t={cci} color="#00ffff" clip="oversold" />
      <Line t={dmiPlus} color="#00ff00" />
      <Line t={dmiMinus} color="#ff00ff" />
      {topSignals.map(([x, y]) => <ellipse key={x} cx={x} cy={y} rx="4" ry="4" fill="#00ffff" />)}
      {bottomSignals.map(([x, y]) => <ellipse key={x} cx={x} cy={y} rx="4" ry="4" fill="#ff0000" />)}
    </Plot>
    <LegendRow
      entries={[
        ["CCI Smothing ekam", 164, "#fff"], ["-68.52", 57, "#9a9a9a"], ["120.00", 58, "#828282"],
        ["-120.00", 65, "#828282"], ["-68.52", 56, "#3c3c3e"], ["DMI", 48, "#fff"], ["16.51", 50, "#00ff00"],
        ["23.22", 50, "#ff00ff"], ["Stoc colore", 119, "#fff"], ["-0.68", 50, "#cc6600"],
      ]}
    />
    <PriceAxis top={773} height={215}
      labels={[
        { y: 790 }, { y: 812, text: "150.00" }, { y: 856, text: "50.00" }, { y: 878 }, { y: 900, text: "-50.00" },
        { y: 945, text: "-150.00" }, { y: 967 },
      ]}
      tags={[
        { y: 816, text: "120.00", color: "#808080" }, { y: 921, text: "-120.00", color: "#808080" },
        { y: 899, text: "-68.52", color: "#a0a0a0" },
      ]}
    />
  </Pane>
);

const Chart = () => (
  <ChartFrame>
    <FloatingMdi><MdiButtons /></FloatingMdi>
    <PricePane />
    <LeoPane />
    <CciPane />
    <DateBar>
      <DateTicks width="1832" height="30" viewBox="2 989 1832 30" stroke="#fff">
        {longTicks.map((x) => <path key={x} d={`M${x + 0.5} 989v10`} />)}
        {shortTicks.map((x) => <path key={x} d={`M${x + 0.5} 989v4`} />)}
      </DateTicks>
      <DateRow>
        {dates.map((d) => <DateLabel key={d}>{d}</DateLabel>)}
      </DateRow>
    </DateBar>
  </ChartFrame>
);

const navGlyphs: [string, string][] = [
  ["First tab", "M2 2v7M9 1L4 5.500 9 10z"],
  ["Previous tab", "M8 1L3 5.500 8 10z"],
  ["Next tab", "M3 1l5 4.500L3 10z"],
  ["Last tab", "M9 2v7M2 1l5 4.500L2 10z"],
];
const tabNames = ["SP500 C164", "SP500 C164_2_Int", "SP500 C55", "SP500 C30", "SP500 8 Giorni", "SP500 4 giorni", "SP500 Sito"];

const statusCells: [string, number, boolean?][] = [
  ["Acct:", 52], ["Open Psns:", 91], ["DT BP:", 63], ["Purch Pwr:", 87], ["Closed P/L:", 93], ["RT TE:", 60],
  ["Open P/L:", 84], ["ORDER BAR", 88, true], ["MACROS", 68, true],
];

export default function App() {
  return (
    <Window>
      <GlobalStyle />
      <TitleBar>
        <svg width="17" height="24" viewBox="0 0 17 24" fill="none">
          <path d="M4 23C-2 18 0 5 8 1c7-1 10 6 6 13l-3-1c1-5-2-8-5-5-3 4-3 9-1 15z" fill="#0a3fd0" />
          <path d="M4 8c1-5 8-7 11-2" stroke="#2aa4ff" strokeWidth="2" />
          <path d="M11 10l2 4M3 13l1 8" stroke="#081e8c" strokeWidth="2" />
        </svg>
        <Title>{"TradeStation 8.1 - SP500 - SP500 4 giorni - [Chart Analysis - GS:S&P500  30 min  [CME] S&P500 FUT]"}</Title>
        <Caption>
          <CaptionButton type="button" $width={38} aria-label="Minimize">
            <svg width="20" height="20"><path d="M2.500 13.500h15v4h-15z" fill="#fff" stroke="#4a4a60" /></svg>
          </CaptionButton>
          <CaptionButton type="button" $width={36} aria-label="Restore">
            <svg width="20" height="20" stroke="#4a4a60" fill="#fff">
              <path d="M5.500 2.500h13v11h-13z" /><path d="M1.500 5.500h13v12h-13z" /><path d="M5.500 9.500h5v4h-5z" fill="#8296ad" />
            </svg>
          </CaptionButton>
          <CaptionButton type="button" $width={63} $close aria-label="Close">
            <svg width="20" height="18" viewBox="0 0 20 18">
              <path d="M2 2h5l3 4 3-4h5l-5.500 7 5.500 7h-5l-3-4-3 4H2l5.500-7z" fill="#fff" stroke="#5a4a50" />
            </svg>
          </CaptionButton>
        </Caption>
      </TitleBar>

      <MenuBar>
        <svg width="20" height="18">
          <path d="M0 0h19v17H0z" fill="#061006" /><path d="M0 1h18" stroke="#1212d0" strokeWidth="2" />
          <path d="M2 9l2-3 1 3 3-5 1 4 3-5 2 4" stroke="#18c018" fill="none" /><path d="M1 13h17M17.500 3v13" stroke="#900" strokeDasharray="2 1" />
        </svg>
        {["File", "Edit", "View", "Insert", "Format", "Drawing", "Window", "Help"].map((m) => (
          <MenuItem key={m} type="button">{m}</MenuItem>
        ))}
        <MenuSpace />
        <MdiGroup><MdiButtons /></MdiGroup>
      </MenuBar>

      <ToolBar role="toolbar">
        <Grip />
        <Tools names={["new", "open", "saveAll", "mail", "closeFolder", "|", "window", "print", "|", "tableLeft",
          "tableColor", "lock", "sketch", "blocks", "|"]} />
        <Combo>
          <ComboInput aria-label="Symbol" defaultValue="|" />
          <ArrowButton type="button" aria-label="Open symbol list">
            <svg width="10" height="6"><path d="M0 0h10L5 5z" /></svg>
          </ArrowButton>
        </Combo>
        <ArrowButton type="button" aria-label="Next"><svg width="6" height="10"><path d="M0 0v10l5-5z" /></svg></ArrowButton>
        <Space $w={8} />
        <Tools names={["find"]} />
        <Space $w={79} />
        <Grip />
        <Tools names={["handTableA", "handTableB", "report", "|", "indicator", "arrows", "charts", "|", "propsA",
          "propsB", "|", "calendar", "clockBars", "blackChart", "bars", "candles", "|", "squeeze", "widen", "|",
          "zoomIn", "zoomOut", "|", "pointer", "chartText", "|", "tools", "|", "addTable", "|", "comment"]} />
        <Space $w={14} />
        <Grip />
        <Tools names={["pitchfork", "vbars", "hlines", "calculator", "arcs", "dashFan", "steps", "timeBars", "fan",
          "hArrow", "slashes", "dome", "pencil", "|", "curve", "down", "up", "ellipse", "rect"]} />
        <ToolButton type="button" aria-label="Text"><AbcMark>abc</AbcMark></ToolButton>
      </ToolBar>

      <Chart />

      <ScrollBar>
        <ScrollArrow type="button" aria-label="Scroll left">
          <svg width="6" height="8"><path d="M5 0v8L0 4z" fill="#333" /></svg>
        </ScrollArrow>
        <ScrollTrack>
          <Thumb>
            <svg width="9" height="9" stroke="#777"><path d="M1.500 0v9M4.500 0v9M7.500 0v9" /></svg>
          </Thumb>
        </ScrollTrack>
        <ScrollArrow type="button" aria-label="Scroll right">
          <svg width="6" height="8"><path d="M1 0v8l5-4z" fill="#333" /></svg>
        </ScrollArrow>
      </ScrollBar>

      <TabStrip>
        {navGlyphs.map(([label, d]) => (
          <NavButton key={label} type="button" aria-label={label}>
            <svg width="11" height="11"><path d={d} fill="currentColor" stroke="currentColor" /></svg>
          </NavButton>
        ))}
        <Tabs role="tablist">
          {tabNames.map((name, i) => (
            <Tab key={name} type="button" role="tab" $active={i === 5} aria-selected={i === 5}>
              {i === 0 && (
                <TabEdge $side="left" width="7" height="16">
                  <path d="M0 0l6 16H0z" fill="#f0efef" /><path d="M.5 0l6 16" stroke="#111" />
                </TabEdge>
              )}
              {name}
              <TabEdge $side="right" width="7" height="16">
                {i < 6 ? <path d="M.5 0l6 16M3.500 8L.5 16" stroke="#111" fill="none" /> : (
                  <><path d="M7 0v16H0z" fill="#f0efef" /><path d="M6.500 0l-6 16" stroke="#111" /></>
                )}
              </TabEdge>
            </Tab>
          ))}
        </Tabs>
      </TabStrip>

      <StatusBar>
        <StatusText>For Help, press F1</StatusText>
        {statusCells.map(([text, w, green]) => (
          <Cell key={text} $w={w} $green={green}>{text}</Cell>
        ))}
        <Cell $w={19}>
          <svg width="12" height="12"><circle cx="6" cy="6" r="5" fill="#d00" stroke="#400" /><circle cx="4.500" cy="4" r="1.500" fill="#fcc" /></svg>
        </Cell>
        <Cell $w={124}>04/08/2023 14:59</Cell>
      </StatusBar>
    </Window>
  );
}
